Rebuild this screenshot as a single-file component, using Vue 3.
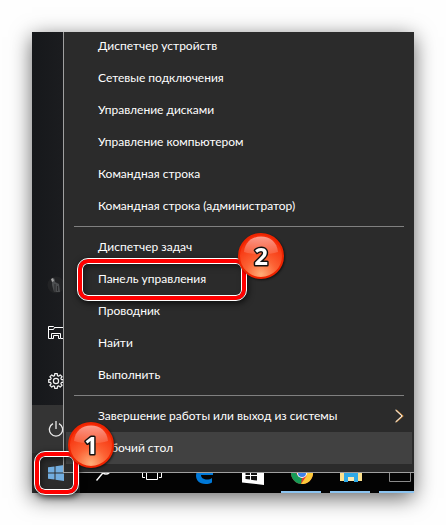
<template>
  <main class="page">
    <div class="screen">
      <div class="desktop">

        <!-- Start rail -->
        <nav class="rail" aria-label="Пуск">
          <button class="rail-btn" type="button" aria-label="Пользователь">
            <svg width="18" height="18" viewBox="0 0 18 18">
              <circle cx="9" cy="9" r="8.5" fill="#222325" />
              <path d="M5 3l2-1 1 2v2l4 2 1 8H7L5 9z" fill="#4c4e50" />
              <path d="M4 3l2-1 1 3-2 1z" fill="#a5a5a5" />
              <path d="M8 8v8M10.500 10v5" stroke="#2a2a2c" />
            </svg>
          </button>
          <button class="rail-btn" type="button" aria-label="Проводник">
            <svg width="18" height="16" viewBox="0 0 18 16" fill="none" stroke="#fff">
              <path d="M4.500 13.500H1.500V1.500H6.500L7.500 2.500H17.500V13.500H14" />
              <path d="M1.500 4.500H6.500L7.500 2.500" />
              <path d="M4.500 13.500V8.500H13.500V13.500H11.500V10.500H6.500V13.500z" />
            </svg>
          </button>
          <button class="rail-btn" type="button" aria-label="Параметры">
            <svg width="16" height="16" viewBox="0 0 16 16" fill="none" stroke="#f2f2f2" stroke-width="1.200">
              <path :d="gearPath" stroke-linejoin="round" />
              <circle cx="8" cy="8" r="2.600" />
            </svg>
          </button>
          <button class="rail-btn rail-btn--active" type="button" aria-label="Выключение">
            <svg width="16" height="16" viewBox="0 0 16 16" fill="none" stroke="#e8e8e8" stroke-width="1.300">
              <path d="M5 2.600A6.600 6.600 0 1 0 11 2.600M8 0v8" />
            </svg>
          </button>
        </nav>

        <!-- Context menu -->
        <div class="menu">
          <div v-for="(group, i) in groups" :key="i" class="menu-group">
            <button
              v-for="item in group"
              :key="item.label"
              type="button"
              :class="['menu-item', item.active ? 'menu-item--active' : '']"
            >
              <span>{{ item.label }}</span>
              <svg v-if="item.submenu" class="chevron" width="9" height="14" viewBox="0 0 9 14" fill="none">
                <path d="M1 1l6.500 6L1 13" stroke="#e8a04a" stroke-width="1.600" />
                <path d="M.5 1L7 7 .5 13" stroke="#e6ecf8" />
              </svg>
              <span v-if="item.marked" class="ring ring--item"></span>
            </button>
          </div>
        </div>
      </div>

      <!-- Taskbar -->
      <div class="taskbar">
        <button class="task-btn task-btn--start" type="button" aria-label="Пуск">
          <svg width="16" height="16" viewBox="0 0 16 16" fill="#72addf">
            <path d="M0 2.300L6.500 1.400V7.500H0zM7.500 1.200L16 0V7.500H7.500zM0 8.500H6.500V14.600L0 13.700zM7.500 8.500H16V16L7.500 14.800z" />
          </svg>
        </button>
        <button class="task-btn" type="button" aria-label="Поиск">
          <svg width="16" height="16" viewBox="0 0 16 16" fill="none" stroke="#fff" stroke-width="1.400">
            <circle cx="10" cy="4.500" r="4.500" />
            <path d="M6.800 8L.5 15.500" />
          </svg>
        </button>
        <button class="task-btn" type="button" aria-label="Представление задач">
          <svg width="20" height="16" viewBox="0 0 20 16" fill="none" stroke="#fff">
            <path d="M4.500 1.500H15.500V14.500H4.500zM3 3.500H.5V12.500H3M17 3.500H19.500V12.500H17" />
          </svg>
        </button>
        <div class="pins">
          <button class="task-btn" type="button" aria-label="Edge">
            <svg width="20" height="22" viewBox="0 0 20 22">
              <path d="M0 10C1 4 5 0 10 0c6 0 9 4 9 9v4H7c0 3 3 4.500 6 4.500 2 0 3.500-.5 5-1.500v4.500c-2 1-4 1.500-6.500 1.500C5 22 2 18 2 13.500 2 10 4 7.500 7 6c-3 0-5.500 1.500-7 4zM7 9h6c0-4-5.500-4-6 0z" fill="#0078d7" />
            </svg>
          </button>
          <button class="task-btn" type="button" aria-label="Store">
            <svg width="22" height="24" viewBox="0 0 22 24">
              <path d="M0 5L22 3V24L0 21.500z" fill="#fff" />
              <path d="M6 6V3c0-4 9-4 9 0v3" fill="none" stroke="#fff" stroke-width="1.500" />
              <path d="M3.500 9.500L8 9v5H3.500zM9 9l6-.5V14H9zM3.500 15H8v3.500L3.500 18zM9 15h6v4.500L9 18.800z" fill="#111" />
            </svg>
          </button>
          <button class="task-btn task-btn--open" type="button" aria-label="Chrome">
            <svg width="22" height="22" viewBox="0 0 22 22">
              <circle cx="11" cy="11" r="11" fill="#e33b2e" />
              <path d="M1.500 5.500L7 14l4 2-1 6A11 11 0 0 1 1.500 5.500z" fill="#169b57" />
              <path d="M11 6h9.800A11 11 0 0 1 10 22l5.500-8z" fill="#fdca3a" />
              <circle cx="11" cy="11" r="5" fill="#fff" />
              <circle cx="11" cy="11" r="4" fill="#3f82e8" />
            </svg>
          </button>
          <button class="task-btn task-btn--open" type="button" aria-label="Папки">
            <svg width="22" height="18" viewBox="0 0 22 18">
              <path d="M0 0H9l2 2H22V17H0z" fill="#fbe08d" />
              <path d="M4 7H18V18H14V13H8V18H4z" fill="#2fa9e6" />
              <path d="M8 13h6v4H8z" fill="#fbe9b0" />
            </svg>
          </button>
          <button class="task-btn task-btn--open" type="button" aria-label="Консоль">
            <svg width="22" height="18" viewBox="0 0 22 18">
              <path d="M.5.5H21.500V17.500H.5z" fill="#050505" stroke="#8a8a8a" />
            </svg>
          </button>
        </div>
      </div>

      <!-- Callouts -->
      <span class="ring ring--start"></span>
      <svg
        v-for="n in 2"
        :key="n"
        :class="['badge', `badge--${n}`]"
        width="46"
        height="46"
        viewBox="0 0 46 46"
      >
        <defs>
          <radialGradient :id="`ball${n}`" cx="50%" cy="92%" r="80%">
            <stop offset="0" stop-color="#ffae78" />
            <stop offset="0.450" stop-color="#fc6234" />
            <stop offset="1" stop-color="#f62c08" />
          </radialGradient>
          <linearGradient :id="`gloss${n}`" x1="0" y1="0" x2="0" y2="1">
            <stop offset="0" stop-color="#fff" stop-opacity="0.550" />
            <stop offset="1" stop-color="#fff" stop-opacity="0.120" />
          </linearGradient>
        </defs>
        <circle cx="23" cy="23" r="22" :fill="`url(#ball${n})`" stroke="#ee2400" stroke-width="2" />
        <path d="M6 19C7 9 14 3.500 23 3.500S39 9 40 19C31 22 15 22 6 19z" :fill="`url(#gloss${n})`" />
        <text x="23" y="32" class="badge-num">{{ n }}</text>
      </svg>
    </div>
  </main>
</template>

<script setup>
const groups = [
  [
    { label: 'Диспетчер устройств' },
    { label: 'Сетевые подключения' },
    { label: 'Управление дисками' },
    { label: 'Управление компьютером' },
    { label: 'Командная строка' },
    { label: 'Командная строка (администратор)' },
  ],
  [
    { label: 'Диспетчер задач' },
    { label: 'Панель управления', marked: true },
    { label: 'Проводник' },
    { label: 'Найти' },
    { label: 'Выполнить' },
  ],
  [
    { label: 'Завершение работы или выход из системы', submenu: true },
    { label: 'Рабочий стол', active: true },
  ],
]

// Eight teeth, four points each
const gearPath = 'M' + Array.from({ length: 8 }, (_, i) => {
  const a = (i * Math.PI) / 4
  return [[-0.26, 5.6], [-0.18, 7.4], [0.18, 7.4], [0.26, 5.6]]
    .map(([d, r]) => `${(8 + r * Math.cos(a + d)).toFixed(2)} ${(8 + r * Math.sin(a + d)).toFixed(2)}`)
    .join('L')
}).join('L') + 'Z'
</script>

<style>
body {
  margin: 0;
  background: #fefefe;
}
</style>

<style scoped>
.page {
  padding: 32px;
  font-family: Lato, 'Open Sans', sans-serif;
}

.screen {
  position: relative;
  background: #030303;
  box-shadow: 0 5px 20px rgba(0, 0, 0, 0.6);
}

button {
  border: 0;
  padding: 0;
  background: none;
  font: inherit;
  color: inherit;
}

svg {
  display: block;
  flex-shrink: 0;
}

.desktop {
  display: flex;
  overflow: hidden;
  position: relative;
  z-index: 1;
}

/* Rail */
.rail {
  width: 31px;
  display: flex;
  flex-direction: column;
  justify-content: flex-end;
  overflow: hidden;
  margin-bottom: 20px;
  background: linear-gradient(90deg, #16181b, #1b1c1f);
}

.rail-btn {
  width: 48px;
  height: 48px;
  display: flex;
  align-items: center;
  justify-content: center;
}

.rail-btn--active {
  background: #343434;
}

/* Menu */
.menu {
  flex: 1;
  min-width: 0;
  margin-top: -2px;
  padding-bottom: 8px;
  background: #2b2b2b;
  border-left: 1px solid #a0a0a0;
  border-bottom: 1px solid #a0a0a0;
}

.menu-group + .menu-group::before {
  content: '';
  display: block;
  height: 1px;
  margin: 4px 10px;
  background: #808080;
}

.menu-item {
  position: relative;
  display: flex;
  align-items: center;
  justify-content: space-between;
  width: calc(100% - 4px);
  height: 32px;
  margin: 0 2px;
  padding: 0 8px 0 32px;
  color: #fff;
  font-size: 12px;
  line-height: 16px;
  white-space: nowrap;
}

.menu-item--active {
  background: #414141;
}

/* Taskbar */
.taskbar {
  display: flex;
  height: 40px;
  margin-top: -20px;
}

.pins {
  display: flex;
  flex: 1;
  min-width: 0;
  margin-left: 3px;
  overflow: hidden;
}

.task-btn {
  width: 48px;
  flex-shrink: 0;
  display: flex;
  align-items: center;
  justify-content: center;
  box-sizing: border-box;
}

.task-btn--start {
  background: #2c2c2c;
}

.pins .task-btn {
  position: relative;
  width: 49px;
}

.task-btn--open::after {
  content: '';
  position: absolute;
  left: 4px;
  right: 5px;
  bottom: 0;
  height: 2px;
  background: #8cc4f0;
}

/* Callouts */
.ring {
  position: absolute;
  z-index: 2;
  box-sizing: border-box;
  border: 4px solid #f00;
  border-radius: 10px;
  outline: 1px solid #fff;
  box-shadow: inset 0 0 0 1px #fff, inset 2px 3px 6px rgba(0, 0, 0, 0.5), 1px 2px 6px 1px rgba(0, 0, 0, 0.7);
}

.ring--item {
  left: 12px;
  top: -4px;
  width: 168px;
  height: 41px;
}

.ring--start {
  left: 3px;
  bottom: -1px;
  width: 43px;
  height: 42px;
}

.badge {
  position: absolute;
  z-index: 3;
  filter: drop-shadow(1px 1px 1px rgba(0, 0, 0, 0.6));
}

.badge--1 {
  left: 36px;
  bottom: 25px;
}

.badge--2 {
  left: 206px;
  top: 201px;
}

.badge-num {
  font-family: 'Open Sans', sans-serif;
  font-size: 24px;
  font-weight: 700;
  text-anchor: middle;
  fill: #fff;
  stroke: #111;
  stroke-width: 3px;
  stroke-linejoin: round;
  paint-order: stroke;
}
</style>
